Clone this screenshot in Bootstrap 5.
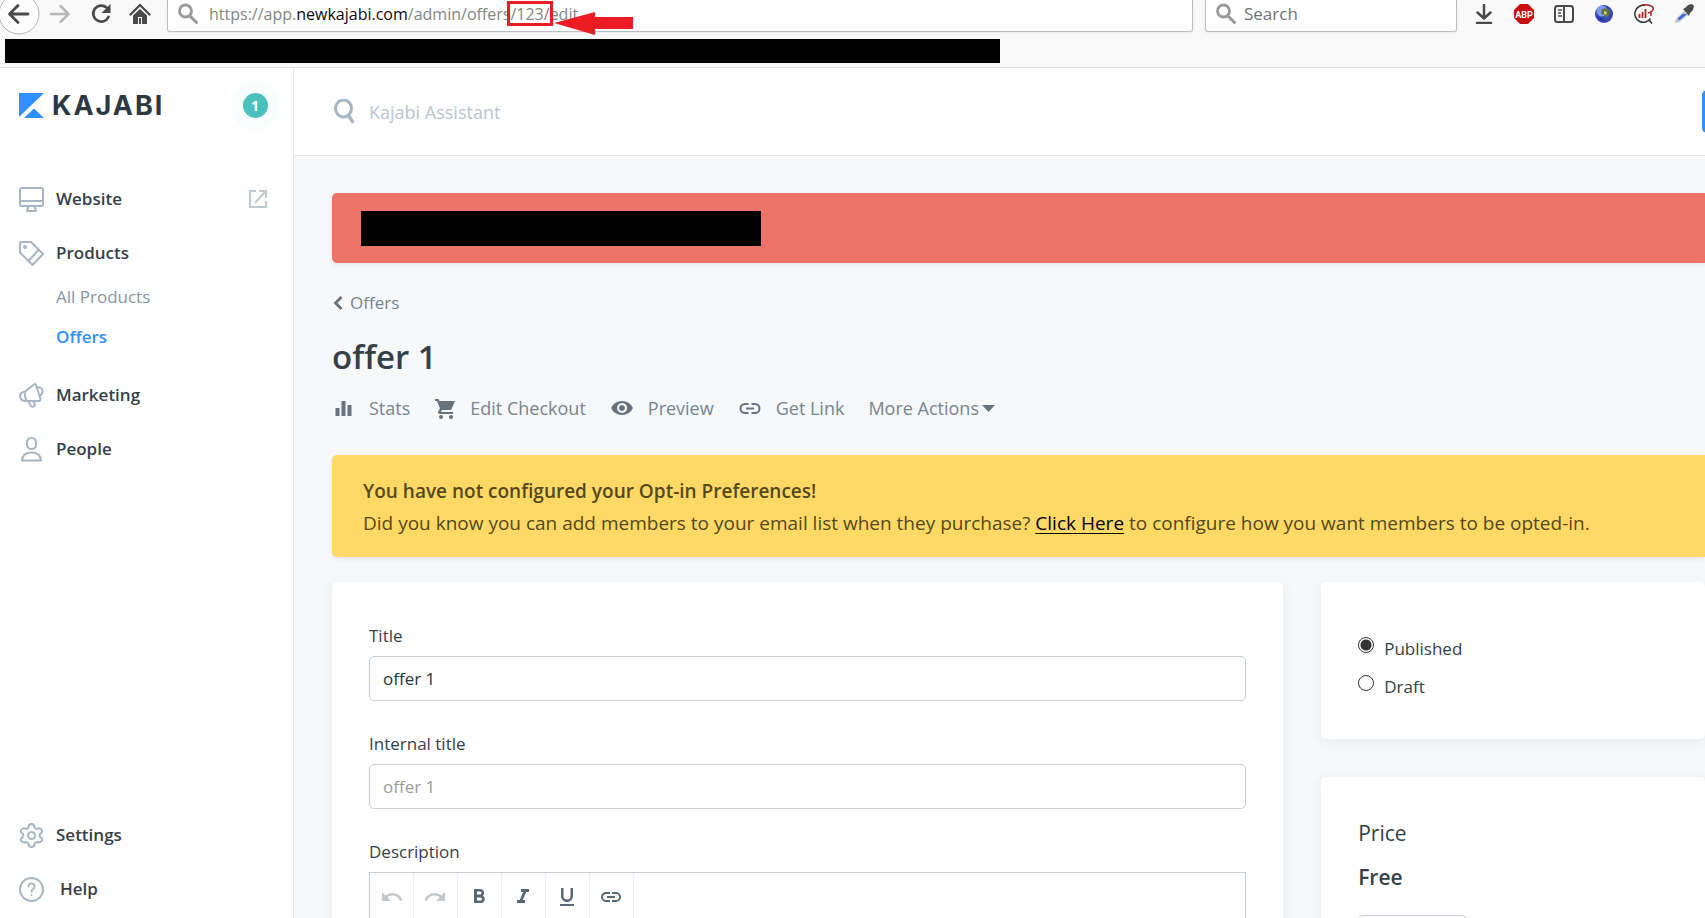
<!DOCTYPE html>
<html lang="en">
<head>
<meta charset="utf-8">
<meta name="viewport" content="width=device-width, initial-scale=1">
<title>Edit offer - Kajabi</title>
<link href="https://cdn.jsdelivr.net/npm/bootstrap@5.3.0/dist/css/bootstrap.min.css" rel="stylesheet">
<style>
  :root { --ink: #363f48; --muted-ink: #778591; --line: #c5ced8; --blue: #2f90ff; --icon: #a8b5c2; }
  body { font-family: "Open Sans", "Noto Sans", sans-serif; font-size: 17px; line-height: 24px; color: var(--ink); background: #f6f8fa; }
  a { text-decoration: none; }
  svg { display: block; flex: none; }
  input::placeholder { color: inherit; opacity: 1; }
  .shell { height: 100vh; overflow: hidden; }

  /* browser chrome */
  .chrome { background: #f9f9f9; border-bottom: 1px solid #dedede; height: 68px; flex: none; }
  .chrome-row { height: 31px; padding-right: 11px; }
  .chrome-nav { width: 167px; height: 28px; }
  .chrome-nav button, .tools button { border: 0; background: none; padding: 0; }
  .chrome-nav .back-btn { width: 41px; height: 41px; margin-left: -1px; margin-right: 9px; }
  .chrome-nav .home-btn { margin: 0 16px; }
  .field { background: #fff; border: 1px solid #bebebe; border-top: 0; border-radius: 0 0 3px 3px; height: 32px; padding: 0 10px 4px; box-shadow: 0 1px 3px rgba(0,0,0,.06); }
  .address { color: #858585; font-size: 16px; padding-left: 11px; white-space: nowrap; outline: 0; }
  .address b { color: #0c0c0d; font-weight: 400; }
  .find { width: 252px; margin-left: 12px; margin-right: 17px; }
  .find input { border: 0; outline: 0; background: none; color: #737373; padding: 0; min-width: 0; }
  .tools { gap: 20px; height: 27px; }
  .marked { position: relative; }
  .marked-box { position: absolute; left: -3px; right: -3px; top: -2px; height: 25px; border: 3px solid #ed1c24; }
  .marked-arrow { position: absolute; left: 100%; top: 9px; margin-left: 4px; }
  .redacted { background: #000; }
  .redacted-tabs { width: 995px; max-width: 90%; height: 24px; margin: 8px 0 0 5px; }

  /* sidebar */
  .side { width: 294px; flex: none; background: #fff; border-right: 1px solid #e3e7eb; padding: 0 14px 2px 19px; }
  .brand { height: 75px; margin-bottom: 29px; }
  .wordmark { font: 700 27px/32px "Inter", sans-serif; letter-spacing: 2px; color: #2e3842; margin-left: 8px; }
  .halo { width: 48px; height: 48px; border-radius: 50%; background: #f8fdfd; }
  .count { width: 25px; height: 25px; border-radius: 50%; background: #4bc1bd; color: #fff; font-size: 14px; }
  .side .item { height: 54px; color: var(--ink); font-weight: 600; gap: 12px; }
  .side .tail { margin-right: 11px; }
  .side .subnav { margin-top: -3px; margin-bottom: 11px; }
  .side .sub { height: 40px; padding-left: 37px; color: #8795a3; }
  .side .sub.on { color: var(--blue); font-weight: 600; }
  .stroke { fill: none; stroke: var(--icon); stroke-width: 2; stroke-linejoin: round; stroke-linecap: round; }

  /* main column */
  .topbar { background: #fff; border-bottom: 1px solid #e3e7eb; height: 88px; padding-left: 40px; overflow: hidden; }
  .topbar input { border: 0; outline: 0; background: none; color: #bcc5ce; padding: 0; font-size: 18px; }
  .topbar .lens { margin-right: 14px; }
  .cta { flex: none; width: 120px; height: 43px; margin-right: -117px; border: 0; border-radius: 5px; background: var(--blue); }
  .content { padding: 37px 0 0 38px; }
  .notice { border-radius: 5px 0 0 5px; box-shadow: 0 2px 5px rgba(0,0,0,.08); }
  .notice-red { background: #ec7368; padding: 18px 29px 17px; }
  .redacted-msg { width: 400px; max-width: 100%; height: 35px; }
  .crumb { color: var(--muted-ink); margin-top: 28px; gap: 7px; padding-left: 1px; }
  h1 { font-size: 33px; line-height: 44px; font-weight: 600; margin: 20px 0 0; }
  .actions { margin: 17px 0 35px; gap: 24px; color: var(--muted-ink); font-size: 18px; }
  .actions a, .actions button { color: inherit; display: flex; align-items: center; border: 0; background: none; padding: 0; gap: 14px; }
  .actions .more { gap: 3px; }
  .actions svg { fill: #66727e; }
  .notice-yellow { background: #fed966; color: #55481c; padding: 20px 31px 18px; font-size: 19px; line-height: 32px; }
  .notice-yellow strong { font-weight: 600; }
  .notice-yellow a { color: #000; text-decoration: underline; text-underline-offset: 3px; }
  .panels { display: grid; grid-template-columns: 57fr 23fr; gap: 38px; margin-top: 25px; align-items: start; }
  .stack { display: grid; gap: 38px; }
  .panel { background: #fff; border-radius: 5px; box-shadow: 0 3px 14px rgba(40,50,60,.07); padding: 42px 37px 37px; }
  .panel .form-label { margin-bottom: 8px; display: block; }
  .panel .form-control { height: 45px; font-size: 17px; color: #2c343c; border-color: var(--line); border-radius: 5px; padding: 0 13px; margin-bottom: 31px; }
  .panel .form-control::placeholder { color: #9b9b9b; }
  .editor { border: 1px solid var(--line); height: 160px; }
  .editor button { width: 44px; height: 48px; border: 0; border-right: 1px solid #eceef0; background: none; padding: 0; margin-right: -1px; }
  .editor button + button { width: 45px; }
  .editor svg { fill: #5a6875; margin: 0 auto; }
  .editor .off svg { fill: #c2c7cc; }
  .panel.status { padding-top: 48px; padding-bottom: 33px; }
  .status label { gap: 10px; height: 38px; }
  .status input { appearance: none; width: 16px; height: 16px; margin: 7px 0 0; border: 1px solid #333; border-radius: 50%; background: #fff; }
  .status input:checked { background: radial-gradient(circle, #333 5px, #fff 6px); }
  .status span { line-height: 38px; }
  .price { font-size: 21px; line-height: 28px; }
  .price-edit { width: 109px; height: 40px; background: #fff; border: 1px solid var(--line); border-radius: 5px; }
</style>
</head>
<body>
<div class="shell d-flex flex-column">
  <header class="chrome">
    <div class="chrome-row d-flex align-items-start">
      <div class="chrome-nav d-flex align-items-center flex-shrink-0">
        <button class="back-btn" aria-label="Back"><svg width="41" height="41" viewBox="0 0 41 41"><circle cx="20" cy="20" r="20" fill="#fdfdfd" stroke="#b5b5b5"/><path d="M29 20H11M19 11.500L10.500 20l8.500 8.500" fill="none" stroke="#4a4a4a" stroke-width="2.800" stroke-linecap="round" stroke-linejoin="round"/></svg></button>
        <button class="me-auto" aria-label="Forward"><svg width="22" height="20" viewBox="0 0 22 20"><path d="M2 10h17M11.500 2l8 8-8 8" fill="none" stroke="#b8b8b8" stroke-width="2.500" stroke-linecap="round" stroke-linejoin="round"/></svg></button>
        <button aria-label="Reload"><svg width="22" height="22" viewBox="0 0 22 22"><path d="M15.500 4.500A8 8 0 1 0 17.500 14" fill="none" stroke="#4a4a4a" stroke-width="2.700" stroke-linecap="round"/><path d="M19.500 1v9h-9z" fill="#4a4a4a"/></svg></button>
        <button class="home-btn" aria-label="Home"><svg width="22" height="22" viewBox="0 0 22 22"><path d="M1.500 11.500L11 2l9.500 9.500" fill="none" stroke="#4a4a4a" stroke-width="2.300" stroke-linecap="round" stroke-linejoin="round"/><path fill-rule="evenodd" d="M4 12.500L11 6l7 6.500V21h-5v-7H9v7H4zM10 15h2v6h-2z" fill="#4a4a4a"/></svg></button>
      </div>
      <div class="field d-flex align-items-center flex-grow-1">
        <svg width="20" height="21" viewBox="0 0 20 21"><circle cx="7.500" cy="8" r="6" fill="none" stroke="#999" stroke-width="2.800"/><path d="M12 13l6.500 6.500" stroke="#999" stroke-width="3" stroke-linecap="round"/></svg>
        <div class="address" role="textbox" aria-label="Address" contenteditable="true" spellcheck="false">https://app.<b>newkajabi.com</b>/admin/offers<span class="marked">/123/<span class="marked-box"></span><svg class="marked-arrow" width="80" height="23" viewBox="0 0 80 23"><path d="M0 11L41 0v5h38v12H41v6z" fill="#ed1c24"/></svg></span>edit</div>
      </div>
      <div class="field find d-flex align-items-center">
        <svg width="20" height="21" viewBox="0 0 20 21"><circle cx="7.500" cy="8" r="6" fill="none" stroke="#999" stroke-width="2.800"/><path d="M12 13l6.500 6.500" stroke="#999" stroke-width="3" stroke-linecap="round"/></svg>
        <input class="ms-2 w-100" type="text" placeholder="Search" aria-label="Search the web">
      </div>
      <div class="tools d-flex align-items-center">
        <button aria-label="Downloads"><svg width="20" height="20" viewBox="0 0 20 20"><path d="M10 1v13M3.500 8.500L10 14.500l6.500-6M3 19h14" fill="none" stroke="#4a4a4a" stroke-width="2.500" stroke-linecap="round" stroke-linejoin="round"/></svg></button>
        <button aria-label="Ad blocker"><svg width="20" height="20" viewBox="0 0 20 20"><path d="M6 0h8l6 6v8l-6 6H6l-6-6V6z" fill="#c70d0d"/><text x="10" y="13.500" text-anchor="middle" font-family="Roboto, sans-serif" font-size="9" font-weight="700" fill="#fff">ABP</text></svg></button>
        <button aria-label="Sidebars"><svg width="20" height="20" viewBox="0 0 20 20" fill="none" stroke="#4a4a4a"><rect x="1" y="2" width="18" height="16" rx="2.500" stroke-width="2"/><path d="M10 2v16" stroke-width="2"/><path d="M4 6h4M4 9h3M4 12h4" stroke-width="1.500"/></svg></button>
        <button aria-label="Proxy"><svg width="20" height="20" viewBox="0 0 20 20"><circle cx="10" cy="10" r="9" fill="#3747b5"/><circle cx="8" cy="7" r="5.500" fill="#7b9af0"/><path d="M8 5l4-1 4 3-1 4-3 3-2-3-3-1z" fill="#66743f"/><path d="M10 7l3 1-1 3-2-1z" fill="#e0c565"/><path d="M4 13l4 1 2 3-4-1z" fill="#23328d"/></svg></button>
        <button aria-label="Analytics"><svg width="20" height="20" viewBox="0 0 20 20" fill="none"><path d="M11 1.500A8.500 8.500 0 1 0 16.500 14.500M15 16l3 3.500" stroke="#333" stroke-width="1.500"/><path d="M8 1q8-1 11.500 3Q19 8 14 9M17 7v5" stroke="#b02228" stroke-width="1.500"/><path d="M5.500 14v-4M8.500 14V8M11.500 14V5" stroke="#b02228" stroke-width="1.800"/></svg></button>
        <button aria-label="Color picker"><svg width="20" height="20" viewBox="0 0 20 20"><path d="M10 7l4 4-9 7-4 1 1-4z" fill="#bac3cf"/><path d="M4 14l5-4h4l-8 6.500z" fill="#3565d8"/><path d="M9 5l2-1 3-3 4-1 2 2-1 4-3 3-1 3z" fill="#4c4c4c"/></svg></button>
      </div>
    </div>
    <div class="redacted redacted-tabs"></div>
  </header>

  <div class="d-flex flex-grow-1 overflow-hidden">
    <nav class="side d-flex flex-column" aria-label="Main">
      <div class="brand d-flex align-items-center">
        <svg width="25" height="25" viewBox="0 0 25 25" fill="#2f90ff"><path d="M0 0h25L0 24z"/><path d="M5 25l10-9.500L25 25z"/></svg>
        <span class="wordmark">KAJABI</span>
        <span class="halo d-flex align-items-center justify-content-center ms-auto"><span class="count d-flex align-items-center justify-content-center fw-bold">1</span></span>
      </div>
      <a class="item d-flex align-items-center" href="#"><svg class="stroke" width="25" height="25" viewBox="0 0 25 25"><rect x="1" y="1" width="23" height="18" rx="1.500"/><path d="M1 14h23M9.500 19l-1.500 5h9l-1.500-5"/></svg>Website
        <svg class="tail ms-auto" width="22" height="20" viewBox="0 0 22 20" fill="none" stroke="#c0c8d0" stroke-width="2"><path d="M10 2H4v16h16v-6M13 2h7v7M20 2L9 14"/></svg></a>
      <a class="item d-flex align-items-center" href="#"><svg class="stroke" width="25" height="25" viewBox="0 0 25 25"><path d="M2.500 1H12l12 12-10.500 11L1 11.500V2.500Q1 1 2.500 1zM19 9.500L9.500 20"/><circle cx="6" cy="6" r="1"/></svg>Products</a>
      <div class="subnav">
        <a class="sub d-flex align-items-center" href="#">All Products</a>
        <a class="sub on d-flex align-items-center" href="#">Offers</a>
      </div>
      <a class="item d-flex align-items-center" href="#"><svg class="stroke" width="25" height="25" viewBox="0 0 25 25"><path d="M6 8.500L15 1.500q1.500-1 2 .5l4.500 14q.3 2-1.500 2H7q-5 .5-6-4.500Q.8 9.500 6 8.500zM6 8.500q-1 5 2 9.500M18.500 4.500q4-1 5 3 .5 4-2.500 5M9 18l3 5q2 2 4-1l-1.500-4"/></svg>Marketing</a>
      <a class="item d-flex align-items-center" href="#"><svg class="stroke" width="25" height="25" viewBox="0 0 25 25"><rect x="8" y="1" width="9" height="11" rx="4.500"/><path d="M3 23.500q.5-8 9.500-8t9.500 8z"/></svg>People</a>
      <a class="item d-flex align-items-center mt-auto" href="#"><svg class="stroke" width="25" height="25" viewBox="0 0 25 25"><path d="M9.500 4.500Q9.500 1 12.500 1t3 3.500Q16.500 6 18 6q3-2 5 1.500 1 2-2 3.500-.5 1.500 0 3 3 1.500 2 3.500-2 3-5 1.500-1.500 0-2.500 1.500 0 3.500-3 3.500t-3-3.500Q8.500 19 7 19q-3 1.500-5-1.500-1-2 2-3.500.5-1.500 0-3-3-1.500-2-3.500Q4 4 7 6q1.500 0 2.500-1.500z"/><circle cx="12.500" cy="12.500" r="3.500"/></svg>Settings</a>
      <a class="item d-flex align-items-center" href="#"><svg class="stroke" width="25" height="25" viewBox="0 0 25 25"><circle cx="12.500" cy="12.500" r="11.500"/><path d="M9.500 9.500q0-3 3-3t3.300 2.800q0 1.700-1.800 2.700-1.500.8-1.500 2.800M12.500 17.800v.2" stroke-width="1.800"/></svg><span class="ps-1">Help</span></a>
    </nav>

    <div class="flex-grow-1 overflow-hidden">
      <div class="topbar d-flex align-items-center">
        <svg class="lens" width="21" height="25" viewBox="0 0 21 25" fill="none" stroke="#a8b5c2"><ellipse cx="9.500" cy="9.500" rx="8" ry="8.500" stroke-width="3"/><path d="M14.500 16.500l4 6" stroke-width="3.500" stroke-linecap="round"/></svg>
        <input class="flex-grow-1" type="text" placeholder="Kajabi Assistant" aria-label="Kajabi Assistant">
        <button class="cta" aria-label="Open assistant"></button>
      </div>

      <main class="content">
        <div class="notice notice-red"><div class="redacted redacted-msg"></div></div>
        <a class="crumb d-flex align-items-center" href="#"><svg width="10" height="16" viewBox="0 0 10 16"><path d="M8.500 2L2.500 8l6 6" fill="none" stroke="#66727e" stroke-width="2.800"/></svg>Offers</a>
        <h1>offer 1</h1>
        <div class="actions d-flex align-items-center">
          <a href="#"><svg width="23" height="22" viewBox="0 0 23 22"><path d="M3.500 11h4v8h-4zM9.500 4h4v15h-4zM15.500 8h4v11h-4z"/></svg>Stats</a>
          <a href="#"><svg width="22" height="22" viewBox="0 0 22 22"><path d="M1 2h3.500l1 2H21l-3.500 8q-.5 1-1.500 1H8l-1 2h12v2H6q-3-.5-1.500-3L6 11.500 3 4H1z"/><circle cx="7" cy="20" r="2"/><circle cx="17" cy="20" r="2"/></svg>Edit Checkout</a>
          <a href="#"><svg width="24" height="22" viewBox="0 0 24 22"><path fill-rule="evenodd" d="M12 4q7.500 0 11 7-3.500 7-11 7T1 11q3.500-7 11-7zM12 6a5 5 0 1 0 .1 0zM12 8a3 3 0 1 1-.1 0z"/></svg>Preview</a>
          <a href="#"><svg width="24" height="22" viewBox="0 0 24 22"><path d="M10.500 7H7a4 4 0 0 0 0 9h3.500M13.500 7H17a4 4 0 0 1 0 9h-3.500M8 11.500h8" style="fill:none;stroke:#66727e;stroke-width:2"/></svg>Get Link</a>
          <button class="more" type="button">More Actions<svg width="13" height="8" viewBox="0 0 13 8"><path d="M0 1h13L6.500 8z"/></svg></button>
        </div>

        <div class="notice notice-yellow">
          <strong class="d-block">You have not configured your Opt-in Preferences!</strong>
          Did you know you can add members to your email list when they purchase? <a href="#">Click Here</a> to configure how you want members to be opted-in.
        </div>

        <div class="panels">
          <section class="panel">
            <label class="form-label" for="title">Title</label>
            <input class="form-control" id="title" type="text" value="offer 1">
            <label class="form-label" for="internal">Internal title</label>
            <input class="form-control" id="internal" type="text" placeholder="offer 1">
            <span class="form-label">Description</span>
            <div class="editor d-flex align-items-start">
              <button class="off" aria-label="Undo"><svg width="24" height="24" viewBox="0 0 24 24"><path d="M12.500 8c-2.650 0-5.050.990-6.900 2.600L2 7v9h9l-3.620-3.620c1.390-1.160 3.160-1.880 5.120-1.880 3.540 0 6.550 2.310 7.600 5.500l2.370-.780C21.080 11.030 17.150 8 12.500 8z"/></svg></button>
              <button class="off" aria-label="Redo"><svg width="24" height="24" viewBox="0 0 24 24"><path d="M18.400 10.600C16.550 8.990 14.150 8 11.500 8c-4.650 0-8.580 3.030-9.960 7.220L3.900 16c1.050-3.190 4.050-5.500 7.600-5.500 1.950 0 3.730.720 5.120 1.880L13 16h9V7z"/></svg></button>
              <button aria-label="Bold"><svg width="24" height="24" viewBox="0 0 24 24"><path fill-rule="evenodd" d="M15.600 10.790c.970-.670 1.650-1.770 1.650-2.790 0-2.260-1.750-4-4-4H7v14h7.040c2.090 0 3.710-1.700 3.710-3.790 0-1.520-.860-2.820-2.150-3.420zM10 6.500h3a1.500 1.500 0 0 1 0 3h-3zm3.500 9H10v-3h3.500a1.500 1.500 0 0 1 0 3z"/></svg></button>
              <button aria-label="Italic"><svg width="24" height="24" viewBox="0 0 24 24"><path d="M10 4v3h2.210l-3.420 8H6v3h8v-3h-2.210l3.420-8H18V4z"/></svg></button>
              <button aria-label="Underline"><svg width="24" height="24" viewBox="0 0 24 24"><path d="M12 17c3.310 0 6-2.690 6-6V3h-2.500v8a3.500 3.500 0 0 1-7 0V3H6v8c0 3.310 2.690 6 6 6zm-7 2v2h14v-2z"/></svg></button>
              <button aria-label="Link"><svg width="24" height="24" viewBox="0 0 24 24"><path d="M3.900 12c0-1.710 1.390-3.100 3.100-3.100h4V7H7a5 5 0 0 0 0 10h4v-1.900H7A3.100 3.100 0 0 1 3.900 12zM8 13h8v-2H8zm9-6h-4v1.900h4a3.100 3.100 0 0 1 0 6.200h-4V17h4a5 5 0 0 0 0-10z"/></svg></button>
            </div>
          </section>
          <div class="stack">
            <section class="panel status pe-0">
              <label class="d-flex align-items-start"><input type="radio" name="status" checked><span>Published</span></label>
              <label class="d-flex align-items-start"><input type="radio" name="status"><span>Draft</span></label>
            </section>
            <section class="panel">
              <div class="price mb-3">Price</div>
              <div class="price fw-semibold mb-4">Free</div>
              <button class="price-edit" aria-label="Edit price"></button>
            </section>
          </div>
        </div>
      </main>
    </div>
  </div>
</div>
<script src="https://cdn.jsdelivr.net/npm/bootstrap@5.3.0/dist/js/bootstrap.bundle.min.js"></script>
</body>
</html>
